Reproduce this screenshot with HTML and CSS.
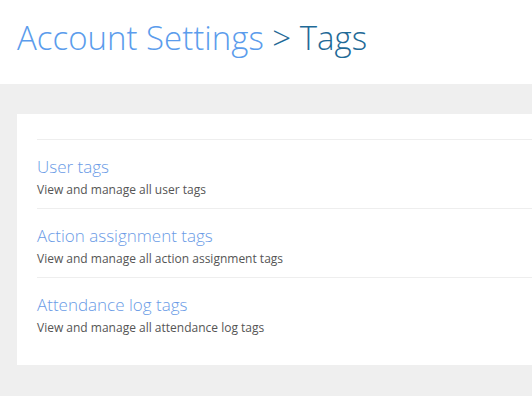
FILE: index.html
```html
<!DOCTYPE html>
<html>
<head>
<meta charset="utf-8">
<link rel="stylesheet" href="styles.css">
</head>
<body>
<header class="page-header">
  <h1 class="page-title"><span class="crumb">Account Settings</span> <span class="current">&gt; Tags</span></h1>
</header>
<main class="content">
  <section class="card">
    <ul class="tag-list">
      <li class="tag-item">
        <a class="tag-title" href="#">User tags</a>
        <p class="tag-desc">View and manage all user tags</p>
      </li>
      <li class="tag-item">
        <a class="tag-title" href="#">Action assignment tags</a>
        <p class="tag-desc">View and manage all action assignment tags</p>
      </li>
      <li class="tag-item">
        <a class="tag-title" href="#">Attendance log tags</a>
        <p class="tag-desc">View and manage all attendance log tags</p>
      </li>
    </ul>
  </section>
</main>
</body>
</html>
```
FILE: styles.css
```css
html, body {
  margin: 0;
  padding: 0;
}
body {
  font-family: "Open Sans", "Liberation Sans", sans-serif;
  background: #efefef;
  width: 532px;
  height: 396px;
  overflow: hidden;
}
.page-header {
  background: #ffffff;
  height: 84px;
  padding: 0 17px;
  box-sizing: border-box;
  display: flex;
  align-items: center;
}
.page-title {
  margin: 0;
  font-weight: 300;
  font-size: 33px;
  line-height: 1;
  white-space: nowrap;
  position: relative;
  top: -5px;
}
.crumb {
  color: #5b9cec;
}
.current {
  color: #1f6a97;
}
.content {
  padding: 30px 0 0 17px;
}
.card {
  background: #ffffff;
  width: 540px;
  height: 251px;
  box-sizing: border-box;
  padding: 25px 0 0 20px;
}
.tag-list {
  list-style: none;
  margin: 0;
  padding: 0;
}
.tag-item {
  border-top: 1px solid #eeeeee;
  height: 69px;
  box-sizing: border-box;
  padding-top: 17px;
}
.tag-title {
  display: block;
  font-weight: 300;
  font-size: 17px;
  line-height: 20px;
  color: #6a9be6;
  text-decoration: none;
}
.tag-desc {
  margin: 5px 0 0;
  font-size: 12px;
  line-height: 16px;
  color: #555555;
}
```
